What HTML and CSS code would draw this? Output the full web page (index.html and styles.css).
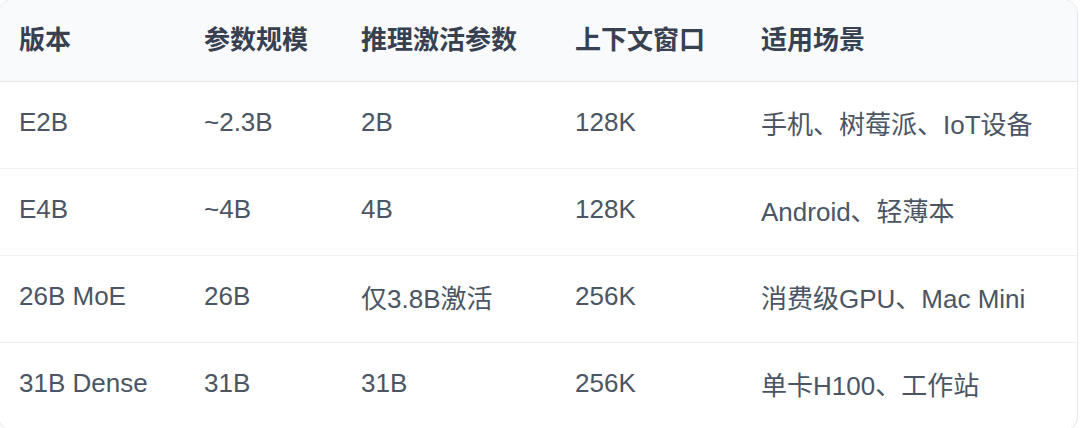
FILE: index.html
```html
<!DOCTYPE html>
<html lang="zh-CN">
<head>
<meta charset="utf-8">
<link rel="stylesheet" href="styles.css">
</head>
<body>
<div class="card">
  <div class="row head">
    <div class="cell">版本</div>
    <div class="cell">参数规模</div>
    <div class="cell">推理激活参数</div>
    <div class="cell">上下文窗口</div>
    <div class="cell">适用场景</div>
  </div>
  <div class="row">
    <div class="cell">E2B</div>
    <div class="cell">~2.3B</div>
    <div class="cell">2B</div>
    <div class="cell">128K</div>
    <div class="cell">手机、树莓派、IoT设备</div>
  </div>
  <div class="row">
    <div class="cell">E4B</div>
    <div class="cell">~4B</div>
    <div class="cell">4B</div>
    <div class="cell">128K</div>
    <div class="cell">Android、轻薄本</div>
  </div>
  <div class="row">
    <div class="cell">26B MoE</div>
    <div class="cell">26B</div>
    <div class="cell">仅3.8B激活</div>
    <div class="cell">256K</div>
    <div class="cell">消费级GPU、Mac Mini</div>
  </div>
  <div class="row last">
    <div class="cell">31B Dense</div>
    <div class="cell">31B</div>
    <div class="cell">31B</div>
    <div class="cell">256K</div>
    <div class="cell">单卡H100、工作站</div>
  </div>
</div>
</body>
</html>
```
FILE: styles.css
```css
* { box-sizing: border-box; }
html, body { margin: 0; padding: 0; background: #ffffff; }
body {
  font-family: "Liberation Sans", "Noto Sans CJK SC", sans-serif;
  font-size: 26px;
  color: #4b5563;
  overflow: hidden;
}
.card {
  width: 1080px;
  margin-left: -2px;
  margin-top: -1px;
  border: 1px solid #e5e7eb;
  border-radius: 14px;
  overflow: hidden;
  background: #ffffff;
}
.row {
  display: grid;
  grid-template-columns: 185px 157px 214px 186px 1fr;
  height: 87px;
  align-items: center;
  border-bottom: 1px solid #f0f1f3;
}
.row.last { border-bottom: none; }
.row.head {
  height: 82px;
  background: #f9fafb;
  border-bottom: 1px solid #e5e7eb;
  font-weight: 700;
  color: #374151;
}
.cell {
  padding: 0 20px 6px;
  white-space: nowrap;
}
```
